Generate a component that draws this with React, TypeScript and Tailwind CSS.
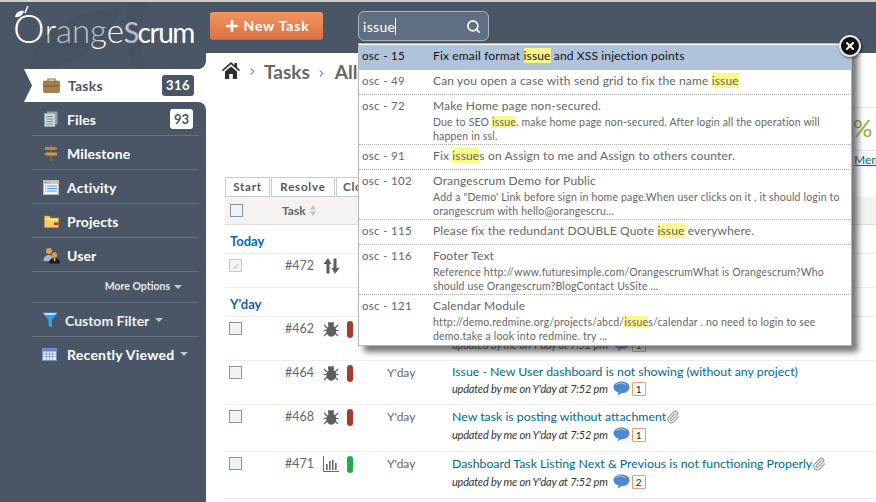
import React from "react";
import { Search, Paperclip, ChevronRight, Plus, X } from "lucide-react";

const Hl = ({ children }: { children: React.ReactNode }) => (
  <span className="bg-[#fbf98a]">{children}</span>
);

function Briefcase() {
  return (
    <svg width="17" height="15" viewBox="0 0 17 15">
      <path d="M5 3V1h7v2" fill="none" stroke="#8a6a3a" strokeWidth="1.2" />
      <rect x="0.5" y="3" width="16" height="11.5" rx="1" fill="#a87f4a" stroke="#7a5a30" strokeWidth="0.6" />
      <path d="M0.5 8h16" stroke="#6f5028" strokeWidth="0.8" />
    </svg>
  );
}
function FilesIcon() {
  return (
    <svg width="14" height="16" viewBox="0 0 14 16">
      <rect x="3" y="0.5" width="10.5" height="13" fill="#8ea5a5" />
      <rect x="0.5" y="2.5" width="10.5" height="13" fill="#cfdcdc" stroke="#8ea5a5" strokeWidth="0.6" />
      <path d="M2.5 5.5h6.5M2.5 8h6.5M2.5 10.5h6.5M2.5 13h6.5" stroke="#6f8a8a" strokeWidth="1" />
    </svg>
  );
}
function MilestoneIcon() {
  return (
    <svg width="14" height="16" viewBox="0 0 14 16">
      <path d="M6.2 0h1.6v16H6.2z" fill="#8c6a2f" />
      <path d="M1 2h11l1.5 1.5L12 5H1z" fill="#b58a3c" />
      <path d="M13 7.5H2L0.5 9 2 10.5h11z" fill="#c69a48" />
    </svg>
  );
}
function ActivityIcon() {
  return (
    <svg width="16" height="15" viewBox="0 0 16 15">
      <rect x="0.5" y="0.5" width="15" height="14" fill="#f4f4f0" stroke="#b9b9b9" />
      <rect x="1" y="1" width="14" height="3" fill="#c9c9c9" />
      <circle cx="2.5" cy="2.5" r="0.7" fill="#d9534f" />
      <circle cx="4.5" cy="2.5" r="0.7" fill="#e0b040" />
      <circle cx="6.5" cy="2.5" r="0.7" fill="#5cb85c" />
      <path d="M4 6h10M4 8.5h10M4 11h10" stroke="#4f9bd9" strokeWidth="1.2" />
      <path d="M2 6h1M2 8.5h1M2 11h1" stroke="#888" strokeWidth="1.2" />
    </svg>
  );
}
function FolderIcon() {
  return (
    <svg width="15" height="13" viewBox="0 0 15 13">
      <path d="M0.5 1h5l1 2h8v9.5H0.5z" fill="#f5cd6a" stroke="#c9992f" strokeWidth="0.6" />
      <path d="M1 4.5h13" stroke="#fff3c8" strokeWidth="1.2" />
      <rect x="10" y="7.5" width="4.5" height="2.5" fill="#b3312b" />
    </svg>
  );
}
function UsersIcon() {
  return (
    <svg width="17" height="17" viewBox="0 0 17 17">
      <circle cx="6" cy="4" r="3" fill="#d9a05b" />
      <path d="M0.5 14c0-4 2.5-6 5.5-6s4 1.5 4 6z" fill="#aab4d0" />
      <circle cx="11.5" cy="8" r="2.7" fill="#e0a030" />
      <path d="M6 16.5c0-3.5 2.2-5.5 5.5-5.5s5.5 2 5.5 5.5z" fill="#1b1b1b" />
      <path d="M10.7 11h1.6v3h-1.6z" fill="#f2c050" />
    </svg>
  );
}
function FunnelIcon() {
  return (
    <svg width="16" height="16" viewBox="0 0 16 16">
      <path d="M0 0.5h16L10 8v7.5L6.5 14V8z" fill="#3d9be0" />
      <path d="M1.5 1h13l-2 2h-9z" fill="#bfe3fa" />
    </svg>
  );
}
function TableIcon() {
  return (
    <svg width="15" height="13" viewBox="0 0 15 13">
      <rect x="0.5" y="0.5" width="14" height="12" fill="#e8effa" stroke="#6f93cf" />
      <rect x="1" y="1" width="13" height="2.5" fill="#5f86c9" />
      <path d="M1 6h13M1 8.5h13M4.5 3.5v9M7.5 3.5v9M10.5 3.5v9" stroke="#7d9ed6" strokeWidth="0.8" />
    </svg>
  );
}
function Bug() {
  return (
    <svg width="16" height="16" viewBox="0 0 16 16" fill="#5d5d5d">
      <ellipse cx="8.3" cy="10" rx="5" ry="5.7" />
      <ellipse cx="8" cy="3.6" rx="3" ry="2.4" />
      <path d="M1 4l3 3M15 4l-3 3M0.5 9.5h3M15.5 9.5h-3M1 15l3-3M15 15l-3-3M5.5 1l1 1.5M10.5 1l-1 1.5" stroke="#5d5d5d" strokeWidth="1.1" fill="none" />
    </svg>
  );
}
function BarsIcon() {
  return (
    <svg width="16" height="16" viewBox="0 0 16 16" fill="#666">
      <path d="M0.5 0v15.5H16" stroke="#555" fill="none" strokeWidth="0.9" />
      <path d="M3 8h1.6v6H3zM6 5h1.6v9H6zM9 4h1.6v10H9zM12 7h1.6v7H12z" />
    </svg>
  );
}
function UpDown() {
  return (
    <svg width="17" height="16" viewBox="0 0 17 16" fill="#5d5d5d">
      <path d="M5 0L0.5 6H3.5V15.5H6.5V6H8.5z" />
      <path d="M12 16L16.5 10H13.5V0.5H10.5V10H8.5z" />
    </svg>
  );
}
function Bubble() {
  return (
    <svg width="17" height="15" viewBox="0 0 17 15">
      <path d="M8.5 0.5C4 0.5 0.5 3 0.5 6.2c0 2.5 2 4.5 5 5.4L4.6 14.5l4.3-2.4c4.5 0 7.6-2.6 7.6-5.9S13 0.5 8.5 0.5z" fill="#4f87d1" />
      <path d="M3 4c1.5-2 7-3 10 0" stroke="#a8c8f0" strokeWidth="1" fill="none" />
    </svg>
  );
}
function Home() {
  return (
    <svg width="18" height="17" viewBox="0 0 18 17" fill="#2f2f2f">
      <path d="M9 0L0 8l1 1.2L9 2.3l8 6.9L18 8l-3-2.7V1h-2.4v2.2z" />
      <path d="M3 9.5L9 4.4l6 5.1V17h-4.2v-5H7.2v5H3z" />
    </svg>
  );
}
function Sprite({ kind }: { kind: string }) {
  return kind === "bug" ? <Bug /> : kind === "bars" ? <BarsIcon /> : <UpDown />;
}

const SideRow = ({ icon, label, badge, h = "h-[34px]" }: { icon: React.ReactNode; label: string; badge?: string; h?: string }) => (
  <div className={`${h} ml-[32px] mr-[8px] border-b border-[#68727f] flex items-center pt-[1px]`}>
    <span className="w-[18px] flex justify-center ml-[10px] mr-[7px] shrink-0">{icon}</span>
    <span className="text-[14px] font-bold text-white tracking-[0.1px]">{label}</span>
    {badge && <span className="ml-auto mr-[5px] bg-white text-[#4a5666] font-bold text-[13px] rounded-[3px] px-[4px] h-[20px] leading-[20px]">{badge}</span>}
  </div>
);

const DropRow = ({ id, active, border = true, title, sub }: { id: string; active?: boolean; border?: boolean; title: React.ReactNode; sub?: React.ReactNode }) => (
  <div className={`flex pl-[3px] pt-[2px] ${active ? "bg-[#afc4da] text-[#111] h-[25px]" : "text-[#666]"} ${border ? "border-b border-dotted border-[#aaa]" : ""} ${sub ? "h-[50px]" : active ? "" : "h-[25px]"}`}>
    <div className="w-[71px] shrink-0 text-[11.5px] leading-[17px] tracking-[0.3px]">{id}</div>
    <div className="min-w-0">
      <div className="text-[12px] leading-[18px] tracking-[0.15px] whitespace-nowrap">{title}</div>
      {sub && <div className="text-[10.5px] leading-[14px] tracking-[0.18px] w-[412px]">{sub}</div>}
    </div>
  </div>
);

const TaskRow = ({ id, kind, bar, title, count, clip, h, checked, date = "Y'day" }: { id: string; kind: string; bar?: string; title?: string; count?: string; clip?: boolean; h: string; checked?: boolean; date?: string }) => (
  <div className={`${h} flex pt-[2px] border-b border-[#eeeeee] text-[#666]`}>
    <div className="w-[60px] shrink-0 pl-[4px]">
      <div className={`w-[13px] h-[13px] border ${checked ? "border-[#c8c8c0] bg-[#f4f4f0] flex items-center justify-center text-[#bbb] text-[10px] leading-none" : "border-[#7c97b4] bg-[#f2f2f0]"} mt-[3px]`}>{checked ? "✓" : ""}</div>
    </div>
    <div className="w-[38px] shrink-0 text-[12.5px] leading-[20px]">{id}</div>
    <div className="w-[24px] shrink-0 pt-[2px]"><Sprite kind={kind} /></div>
    <div className="w-[40px] shrink-0 pt-[2px]">{bar && <div className={`w-[6px] h-[17px] rounded-[3px] ${bar}`} />}</div>
    <div className="w-[65px] shrink-0 text-[12px] leading-[20px]">{date}</div>
    {title && (
      <div className="min-w-0">
        <div className={`flex items-center ${clip ? "h-[20px]" : "h-[18px]"} text-[12.3px] text-[#006a8d] whitespace-nowrap`}>
          {title}
          {clip && <Paperclip size={14} className="text-[#999]" />}
        </div>
        <div className="flex items-center text-[11px] italic tracking-[-0.2px] text-[#333] leading-[15px] whitespace-nowrap">
          updated by me on Y'day at 7:52 pm
          <span className="ml-[5px]"><Bubble /></span>
          <span className="ml-[2px] not-italic border border-[#ef9a6a] bg-white text-[#222] text-[10px] leading-[12px] w-[14px] h-[14px] text-center rounded-[1px]">{count}</span>
        </div>
      </div>
    )}
  </div>
);

export default function App() {
  return (
    <div className="w-[876px] h-[502px] overflow-hidden relative bg-white font-['Lato','Liberation_Sans',sans-serif]">
      <header className="h-[53px] bg-[#4a5666] border-t-2 border-t-[#cfcfcf] flex items-start relative">
        <div className="relative w-[210px] pl-[13px] pt-[6px] shrink-0 h-[50px]">
          <span className="text-[40px] leading-[40px] text-white font-light whitespace-nowrap">O<span className="text-[33px]">range</span><span className="text-[28px] font-normal tracking-[-1.5px]">Scrum</span></span>
          <svg className="absolute left-[13px] top-[2px]" width="20" height="20" viewBox="0 0 20 20">
            <path d="M2 13C3 8 7 6 11 7c-1 4-5 7-9 6z" fill="#fff" />
            <path d="M12 9c1-3 2-5 3-7" stroke="#fff" strokeWidth="1.6" fill="none" />
          </svg>
        </div>
        <button className="mt-[10px] w-[113px] h-[28px] rounded-[3px] bg-gradient-to-b from-[#f19563] to-[#dc7340] border-b border-[#c86a3a] text-white text-[14px] font-bold tracking-[0.8px] flex items-center justify-center gap-[4px]">
          <Plus size={16} strokeWidth={4} />New Task
        </button>
        <div className="ml-[35px] mt-[9px] w-[131px] h-[30px] bg-[#5f6e80] border border-[#aab3be] rounded-[6px] flex items-center pl-[4px] pr-[7px]">
          <span className="text-white text-[14px] tracking-[0.3px]">issue</span>
          <span className="w-px h-[17px] bg-white" />
          <Search size={15} strokeWidth={2.6} className="text-white ml-auto" />
        </div>
      </header>

      <div className="flex h-[449px]">
        <aside className="w-[206px] shrink-0 flex flex-col relative">
          <div className="h-[16px] bg-[#4a5666] rounded-br-[8px]" />
          <div className="h-[33px] bg-[#4a5666]">
            <div className="h-full ml-[24px] bg-white [clip-path:polygon(0_0,100%_0,100%_100%,0_100%,8px_50%)] flex items-center pl-[19px] pr-[12px]">
              <span className="mr-[8px]"><Briefcase /></span>
              <span className="text-[14px] font-bold text-[#4a5666] tracking-[0.2px]">Tasks</span>
              <span className="ml-auto bg-[#4a5666] text-white font-bold text-[13px] tracking-[0.5px] rounded-[3px] w-[32px] h-[21px] text-center leading-[21px]">316</span>
            </div>
          </div>
          <div className="flex-1 bg-[#4a5666] rounded-tr-[8px]">
            <SideRow icon={<FilesIcon />} label="Files" badge="93" />
            <SideRow icon={<MilestoneIcon />} label="Milestone" />
            <SideRow icon={<ActivityIcon />} label="Activity" />
            <SideRow icon={<FolderIcon />} label="Projects" />
            <SideRow icon={<UsersIcon />} label="User" />
            <div className="h-[31px] ml-[32px] mr-[8px] border-b border-[#68727f] flex items-center justify-end pr-[16px] text-[10.5px] font-bold text-[#e4e6e9]">
              More Options
              <span className="ml-[4px] border-x-[4px] border-x-transparent border-t-[4px] border-t-[#c3c8ce]" />
            </div>
            <div className="h-[34px] ml-[32px] mr-[8px] border-b border-[#68727f] flex items-center pt-[1px] text-[14px] font-bold text-[#eef0f2]">
              <span className="ml-[10px] mr-[7px]"><FunnelIcon /></span>Custom Filter
              <span className="ml-[6px] border-x-[4px] border-x-transparent border-t-[4px] border-t-[#c3c8ce]" />
            </div>
            <div className="h-[34px] ml-[32px] mr-[8px] flex items-center text-[14px] font-bold tracking-[0.25px] text-white">
              <span className="ml-[10px] mr-[10px]"><TableIcon /></span>Recently Viewed
              <span className="ml-[6px] border-x-[4px] border-x-transparent border-t-[4px] border-t-[#c3c8ce]" />
            </div>
          </div>
        </aside>

        <main className="flex-1 min-w-0 overflow-hidden">
          <div className="h-[54px] pt-[9px] pl-[16px] flex items-start">
            <Home />
            <ChevronRight size={11} className="ml-[7px] mt-[4px] text-[#333]" />
            <span className="ml-[6px] text-[19px] font-bold text-[#666] leading-[20px]">Tasks</span>
            <ChevronRight size={11} className="ml-[6px] mt-[6px] text-[#333]" />
            <span className="ml-[8px] text-[19px] font-bold text-[#666] leading-[20px]">All</span>
          </div>
          <div className="h-[43px] border-t border-[#e4e4e4] ml-[640px] w-[30px] overflow-hidden">
            <div className="text-[24px] leading-[40px] text-[#8ab33c] pl-[5px] whitespace-nowrap -ml-[12px]">0%</div>
          </div>
          <div className="h-[27px] border-t border-[#e4e4e4] ml-[640px] w-[30px] overflow-hidden pl-[8px] text-[12px] leading-[18px] text-[#006a8d] underline whitespace-nowrap">Members</div>
          <div className="pl-[19px] h-[20px] flex gap-[1px] text-[11.5px] font-bold text-[#555] tracking-[0.8px]">
            <span className="border border-[#c9c9c9] w-[45px] h-[20px] leading-[18px] text-center">Start</span>
            <span className="border border-[#c9c9c9] w-[64px] h-[20px] leading-[18px] text-center">Resolve</span>
            <span className="border border-[#c9c9c9] w-[64px] h-[20px] leading-[18px] pl-[6px]">Close</span>
          </div>
          <div className="ml-[19px] h-[28px] bg-[#f4f3f1] border-b border-[#dcdcd8] flex items-center text-[#666] font-bold text-[12px]">
            <div className="w-[57px] pl-[5px]"><div className="w-[13px] h-[13px] border border-[#7c97b4] bg-[#f2f2f0]" /></div>
            <span>Task</span>
            <svg className="ml-[4px]" width="6" height="11" viewBox="0 0 6 11" fill="#c4c4c4"><path d="M3 0l3 4.5H0zM3 11l3-4.5H0z" /></svg>
          </div>
          <div className="ml-[19px]">
            <div className="h-[29px] pl-[5px] pt-[6px] text-[13px] font-bold text-[#0f63b0] border-b border-[#eeeeee] leading-[20px]">Today</div>
            <TaskRow h="h-[34px]" id="#472" kind="updown" checked date="" />
            <div className="h-[29px] pl-[5px] pt-[6px] text-[13px] font-bold text-[#0f63b0] border-b border-[#eeeeee] leading-[20px]">Y'day</div>
            <TaskRow h="h-[44px]" id="#462" kind="bug" bar="bg-[#a83c28]" title="Issue" count="1" />
            <TaskRow h="h-[44px]" id="#464" kind="bug" bar="bg-[#a83c28]" title="Issue - New User dashboard is not showing (without any project)" count="1" />
            <TaskRow h="h-[47px]" id="#468" kind="bug" bar="bg-[#a83c28]" title="New task is posting without attachment" clip count="1" />
            <TaskRow h="h-[47px]" id="#471" kind="bars" bar="bg-[#22ab4b]" title="Dashboard Task Listing Next & Previous is not functioning Properly" clip count="2" />
          </div>
        </main>
      </div>

      <svg className="absolute left-0 top-[2px] pointer-events-none" width="206" height="67" viewBox="0 0 206 67">
        <path d="M28 67C38 30 70 8 120 6c-6 24-30 50-70 61z" fill="#3f4b5b" fillOpacity="0.35" />
        <path d="M128 0h22l-8 14-4 20 8 33h-14l-6-35z" fill="#3f4b5b" fillOpacity="0.35" />
      </svg>

      <div className="absolute left-[358px] top-[43px] w-[494px] h-[303px] bg-white border border-[#b5b5b5] shadow-[6px_6px_6px_rgba(60,60,60,0.7)] pt-[1px]">
        <DropRow id="osc - 15" active border={false} title={<>Fix email format <Hl>issue</Hl> and XSS injection points</>} />
        <DropRow id="osc - 49" title={<>Can you open a case with send grid to fix the name <Hl>issue</Hl></>} />
        <DropRow id="osc - 72" title="Make Home page non-secured." sub={<>Due to SEO <Hl>issue</Hl>. make home page non-secured. After login all the operation will happen in ssl.</>} />
        <DropRow id="osc - 91" title={<>Fix <Hl>issue</Hl>s on Assign to me and Assign to others counter.</>} />
        <DropRow id="osc - 102" title="Orangescrum Demo for Public" sub={<>Add a "Demo' Link before sign in home page.When user clicks on it , it should login to orangescrum with hello@orangescru...</>} />
        <DropRow id="osc - 115" title={<>Please fix the redundant DOUBLE Quote <Hl>issue</Hl> everywhere.</>} />
        <DropRow id="osc - 116" title="Footer Text" sub="Reference http://www.futuresimple.com/OrangescrumWhat is Orangescrum?Who should use Orangescrum?BlogContact UsSite ..." />
        <DropRow id="osc - 121" border={false} title="Calendar Module" sub={<>http://demo.redmine.org/projects/abcd/<Hl>issue</Hl>s/calendar . no need to login to see demo.take a look into redmine. try ...</>} />
      </div>
      <div className="absolute left-[839px] top-[35px] w-[22px] h-[22px] rounded-full bg-[#111] border-2 border-[#e8e8e8] flex items-center justify-center shadow-[1px_1px_3px_rgba(0,0,0,0.6)]">
        <X size={12} strokeWidth={4} className="text-white" />
      </div>
    </div>
  );
}
